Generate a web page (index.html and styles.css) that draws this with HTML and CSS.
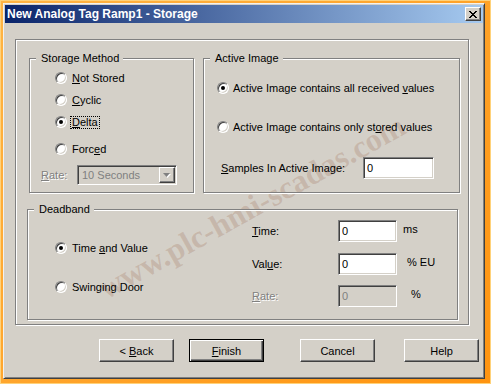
FILE: index.html
```html
<!DOCTYPE html>
<html lang="en">
<head>
    <meta charset="UTF-8">
    <meta name="viewport" content="width=device-width, initial-scale=1.0">
    <title>New Analog Tag Ramp1 - Storage</title>
    <link rel="stylesheet" href="styles.css">
</head>
<body>
    <div class="frame">
        <div class="dialog">
            <div class="watermark">www.plc-hmi-scadas.com</div>

            <div class="title-bar">
                <span class="title">New Analog Tag Ramp1 - Storage</span>
                <button class="close-button">
                    <svg width="8" height="7" viewBox="0 0 8 7"><path d="M0 0h2v1h-2zM6 0h2v1h-2zM1 1h2v1h-2zM5 1h2v1h-2zM2 2h4v1h-4zM3 3h2v1h-2zM2 4h4v1h-4zM1 5h2v1h-2zM5 5h2v1h-2zM0 6h2v1h-2zM6 6h2v1h-2z" fill="#000"/></svg>
                </button>
            </div>

            <div class="page">
                <div class="top-row">
                    <div class="group storage-group">
                        <span class="group-title">Storage Method</span>
                        <div class="radio-row"><span class="radio"></span><span><u>N</u>ot Stored</span></div>
                        <div class="radio-row"><span class="radio"></span><span><u>C</u>yclic</span></div>
                        <div class="radio-row"><span class="radio checked"></span><span class="focus"><u>D</u>elta</span></div>
                        <div class="radio-row forced"><span class="radio"></span><span>Forc<u>e</u>d</span></div>
                        <div class="rate-row">
                            <span class="disabled-label rate-label"><u>R</u>ate:</span>
                            <div class="combo">
                                <span>10 Seconds</span>
                                <span class="combo-button">
                                    <svg width="8" height="5" viewBox="0 0 8 5"><path d="M1 1h7l-3.5 4z" fill="#fff"/><path d="M0 0h7l-3.5 4z" fill="#808080"/></svg>
                                </span>
                            </div>
                        </div>
                    </div>

                    <div class="group active-group">
                        <span class="group-title">Active Image</span>
                        <div class="radio-row"><span class="radio checked"></span><span>Active Image contains all received <u>v</u>alues</span></div>
                        <div class="radio-row second"><span class="radio"></span><span>Active Image contains only st<u>o</u>red values</span></div>
                        <div class="samples-row">
                            <span class="samples-label"><u>S</u>amples In Active Image:</span>
                            <input class="edit samples-edit" type="text" value="0">
                        </div>
                    </div>
                </div>

                <div class="group deadband-group">
                    <span class="group-title">Deadband</span>
                    <div class="deadband-options">
                        <div class="radio-row"><span class="radio checked"></span><span>Time <u>a</u>nd Value</span></div>
                        <div class="radio-row"><span class="radio"></span><span>Swinging Door</span></div>
                    </div>
                    <div class="deadband-fields">
                        <div class="field-row">
                            <span class="field-label"><u>T</u>ime:</span>
                            <input class="edit field-edit" type="text" value="0">
                            <span class="unit unit-ms">ms</span>
                        </div>
                        <div class="field-row value-row">
                            <span class="field-label">Val<u>u</u>e:</span>
                            <input class="edit field-edit" type="text" value="0">
                            <span class="unit unit-eu">% EU</span>
                        </div>
                        <div class="field-row rate-field-row">
                            <span class="field-label disabled-label"><u>R</u>ate:</span>
                            <input class="edit field-edit" type="text" value="0" disabled>
                            <span class="unit unit-pct">%</span>
                        </div>
                    </div>
                </div>
            </div>

            <div class="button-row">
                <button class="push-button">&lt; <u>B</u>ack</button>
                <button class="push-button default finish"><u>F</u>inish</button>
                <button class="push-button cancel">Cancel</button>
                <button class="push-button help">Help</button>
            </div>
        </div>
    </div>
</body>
</html>
```

FILE: styles.css
```css
* {
    margin: 0;
    padding: 0;
    box-sizing: border-box;
}

body {
    width: 491px;
    height: 384px;
    overflow: hidden;
    font-family: "Liberation Sans", Arial, sans-serif;
    font-size: 11px;
    color: #000;
    background-color: #ff9c1f;
}

/* window chrome */

.frame {
    width: 491px;
    height: 384px;
    padding: 3px 6px 5px 3px;
    background: linear-gradient(135deg, #ffb444, #ff9410);
    box-shadow: inset 0 0 0 1px #ffd27a;
}

.dialog {
    position: relative;
    z-index: 0;
    height: 100%;
    padding: 1px;
    background-color: #d4d0c8;
    border: 1px solid;
    border-color: #f4f2ee #404040 #404040 #f4f2ee;
    box-shadow: inset 1px 1px 0 #d4d0c8, inset -1px -1px 0 #808080;
}

.watermark {
    position: absolute;
    z-index: -1;
    left: 248px;
    top: 203px;
    transform: translate(-50%, -50%) rotate(-29deg);
    white-space: nowrap;
    font-family: "Liberation Serif", serif;
    font-weight: bold;
    font-size: 32px;
    color: rgba(150, 95, 70, 0.22);
    pointer-events: none;
}

.title-bar {
    height: 18px;
    display: flex;
    align-items: center;
    justify-content: space-between;
    padding: 0 2px;
    background: linear-gradient(to right, #0a246a, #a6caf0);
}

.title {
    color: #fff;
    font-weight: bold;
    font-size: 12px;
}

.close-button {
    width: 16px;
    height: 14px;
    display: flex;
    align-items: center;
    justify-content: center;
    background-color: #d4d0c8;
    border: 1px solid;
    border-color: #fff #404040 #404040 #fff;
    box-shadow: inset -1px -1px 0 #808080;
}

/* etched frames */

.page,
.group {
    border: 1px solid #808080;
    box-shadow: inset 1px 1px 0 #fff, 1px 1px 0 #fff;
}

.page {
    width: 454px;
    height: 286px;
    margin: 16px 0 0 10px;
    padding: 18px 0 0 13px;
}

.top-row {
    display: flex;
    gap: 9px;
}

.group {
    position: relative;
}

.group-title {
    position: absolute;
    top: -8px;
    left: 6px;
    padding: 0 4px 0 5px;
    line-height: 14px;
    background-color: #d4d0c8;
}

.storage-group {
    width: 165px;
    height: 135px;
    padding: 8px 0 0 0;
}

.active-group {
    width: 257px;
    height: 135px;
    padding-top: 18px;
}

.deadband-group {
    width: 431px;
    height: 111px;
    margin: 16px 0 0 -2px;
    display: flex;
}

/* radio buttons */

.radio-row {
    display: flex;
    align-items: center;
    height: 22px;
}

.storage-group .radio-row {
    padding-left: 25px;
}

.storage-group .forced {
    margin-top: 5px;
}

.active-group .radio-row {
    padding-left: 13px;
}

.active-group .second {
    margin-top: 17px;
}

.radio {
    position: relative;
    flex: none;
    width: 12px;
    height: 12px;
    margin-right: 5px;
    border-radius: 50%;
    background-color: #fff;
    border: 1px solid;
    border-color: #808080 #fff #fff #808080;
    box-shadow: inset 1px 1px 0 #404040, inset -1px -1px 0 #d4d0c8;
}

.active-group .radio {
    margin-right: 4px;
}

.radio.checked::after {
    content: "";
    position: absolute;
    left: 3px;
    top: 3px;
    width: 4px;
    height: 4px;
    border-radius: 50%;
    background-color: #000;
}

.focus {
    margin-left: -2px;
    padding: 0 1px;
    line-height: 11px;
    border: 1px dotted #000;
}

.disabled-label {
    color: #808080;
    text-shadow: 1px 1px 0 #fff;
}

/* combo box */

.rate-row {
    display: flex;
    align-items: center;
    height: 20px;
    margin-top: 5px;
    padding-left: 11px;
}

.rate-label {
    width: 36px;
}

.combo {
    width: 100px;
    height: 20px;
    display: flex;
    align-items: center;
    justify-content: space-between;
    padding: 0 1px 0 4px;
    color: #808080;
    background-color: #d4d0c8;
    border: 1px solid;
    border-color: #808080 #fff #fff #808080;
    box-shadow: inset 1px 1px 0 #404040, inset -1px -1px 0 #d4d0c8;
}

.combo-button {
    width: 16px;
    height: 16px;
    display: flex;
    align-items: center;
    justify-content: center;
    background-color: #d4d0c8;
    border: 1px solid;
    border-color: #fff #404040 #404040 #fff;
    box-shadow: inset -1px -1px 0 #808080;
}

/* edit boxes */

.edit {
    height: 22px;
    padding-left: 3px;
    font-family: inherit;
    font-size: 11px;
    color: #000;
    background-color: #fff;
    border: 1px solid;
    border-color: #808080 #fff #fff #808080;
    box-shadow: inset 1px 1px 0 #404040, inset -1px -1px 0 #d4d0c8;
    outline: none;
}

.edit:disabled {
    color: #808080;
    -webkit-text-fill-color: #808080;
    background-color: #d4d0c8;
}

.samples-row {
    display: flex;
    align-items: center;
    margin-top: 19px;
    padding-left: 17px;
}

.samples-label {
    width: 142px;
}

.samples-edit {
    width: 71px;
}

/* deadband */

.deadband-options {
    width: 224px;
    display: flex;
    flex-direction: column;
    gap: 17px;
    padding: 27px 0 0 27px;
}

.deadband-fields {
    padding-top: 10px;
}

.field-row {
    display: flex;
    height: 22px;
}

.value-row {
    margin-top: 11px;
}

.rate-field-row {
    margin-top: 10px;
}

.field-label {
    width: 86px;
    align-self: center;
}

.field-edit {
    width: 59px;
}

.unit {
    padding-top: 3px;
}

.unit-ms {
    padding-left: 6px;
}

.unit-eu {
    padding-left: 10px;
}

.unit-pct {
    padding-left: 14px;
}

/* push buttons */

.button-row {
    display: flex;
    margin-top: 14px;
    padding-left: 94px;
}

.push-button {
    width: 75px;
    height: 23px;
    font-family: inherit;
    font-size: 11px;
    color: #000;
    background-color: #d4d0c8;
    border: 1px solid;
    border-color: #fff #404040 #404040 #fff;
    box-shadow: inset -1px -1px 0 #808080;
}

.push-button.default {
    border: 1px solid #000;
    box-shadow: inset 1px 1px 0 #fff, inset -1px -1px 0 #404040, inset -2px -2px 0 #808080;
}

.finish {
    margin-left: 15px;
}

.cancel {
    margin-left: 36px;
}

.help {
    margin-left: 29px;
}
```
